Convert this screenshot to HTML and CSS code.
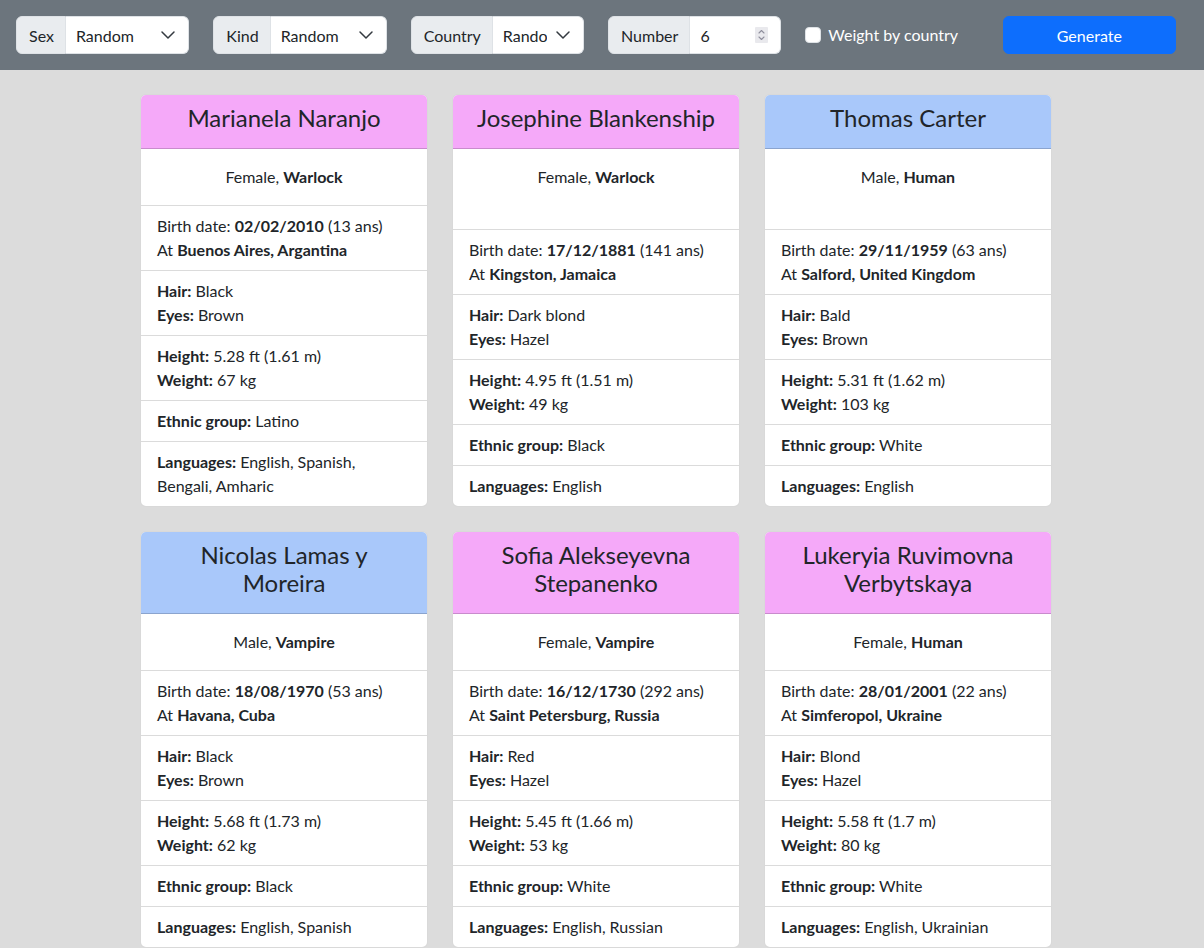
FILE: index.html
```html
<!DOCTYPE html>
<html lang="en">
<head>
<meta charset="utf-8">
<title>Character generator</title>
<link rel="stylesheet" href="styles.css">
</head>
<body>
<nav class="navbar">
  <div class="input-group">
    <span class="ig-label">Sex</span>
    <div class="ig-select"><span class="val">Random</span><svg class="chev" viewBox="0 0 16 16"><path d="M2 5l6 6 6-6"/></svg></div>
  </div>
  <div class="input-group">
    <span class="ig-label">Kind</span>
    <div class="ig-select"><span class="val">Random</span><svg class="chev" viewBox="0 0 16 16"><path d="M2 5l6 6 6-6"/></svg></div>
  </div>
  <div class="input-group">
    <span class="ig-label">Country</span>
    <div class="ig-select"><span class="val">Random</span><svg class="chev" viewBox="0 0 16 16"><path d="M2 5l6 6 6-6"/></svg></div>
  </div>
  <div class="input-group">
    <span class="ig-label">Number</span>
    <div class="ig-select"><span class="val">6</span><svg class="spin" viewBox="0 0 13 16"><rect width="13" height="16" rx="1"/><path d="M4 6l2.5-2.5L9 6M4 10l2.5 2.5L9 10"/></svg></div>
  </div>
  <label class="check"><span class="box"></span>Weight by country</label>
  <button class="btn">Generate</button>
</nav>

<main class="cards">
  <article class="card">
    <header class="card-header female">Marianela Naranjo</header>
    <div class="card-body">Female, <b>Warlock</b></div>
    <div class="item">Birth date: <b>02/02/2010</b> (13 ans)<br>At <b>Buenos Aires, Argantina</b></div>
    <div class="item"><b>Hair:</b> Black<br><b>Eyes:</b> Brown</div>
    <div class="item"><b>Height:</b> 5.28 ft (1.61 m)<br><b>Weight:</b> 67 kg</div>
    <div class="item"><b>Ethnic group:</b> Latino</div>
    <div class="item"><b>Languages:</b> English, Spanish, Bengali, Amharic</div>
  </article>
  <article class="card">
    <header class="card-header female">Josephine Blankenship</header>
    <div class="card-body">Female, <b>Warlock</b></div>
    <div class="item">Birth date: <b>17/12/1881</b> (141 ans)<br>At <b>Kingston, Jamaica</b></div>
    <div class="item"><b>Hair:</b> Dark blond<br><b>Eyes:</b> Hazel</div>
    <div class="item"><b>Height:</b> 4.95 ft (1.51 m)<br><b>Weight:</b> 49 kg</div>
    <div class="item"><b>Ethnic group:</b> Black</div>
    <div class="item"><b>Languages:</b> English</div>
  </article>
  <article class="card">
    <header class="card-header male">Thomas Carter</header>
    <div class="card-body">Male, <b>Human</b></div>
    <div class="item">Birth date: <b>29/11/1959</b> (63 ans)<br>At <b>Salford, United Kingdom</b></div>
    <div class="item"><b>Hair:</b> Bald<br><b>Eyes:</b> Brown</div>
    <div class="item"><b>Height:</b> 5.31 ft (1.62 m)<br><b>Weight:</b> 103 kg</div>
    <div class="item"><b>Ethnic group:</b> White</div>
    <div class="item"><b>Languages:</b> English</div>
  </article>
  <article class="card">
    <header class="card-header male">Nicolas Lamas y Moreira</header>
    <div class="card-body">Male, <b>Vampire</b></div>
    <div class="item">Birth date: <b>18/08/1970</b> (53 ans)<br>At <b>Havana, Cuba</b></div>
    <div class="item"><b>Hair:</b> Black<br><b>Eyes:</b> Brown</div>
    <div class="item"><b>Height:</b> 5.68 ft (1.73 m)<br><b>Weight:</b> 62 kg</div>
    <div class="item"><b>Ethnic group:</b> Black</div>
    <div class="item"><b>Languages:</b> English, Spanish</div>
  </article>
  <article class="card">
    <header class="card-header female">Sofia Alekseyevna Stepanenko</header>
    <div class="card-body">Female, <b>Vampire</b></div>
    <div class="item">Birth date: <b>16/12/1730</b> (292 ans)<br>At <b>Saint Petersburg, Russia</b></div>
    <div class="item"><b>Hair:</b> Red<br><b>Eyes:</b> Hazel</div>
    <div class="item"><b>Height:</b> 5.45 ft (1.66 m)<br><b>Weight:</b> 53 kg</div>
    <div class="item"><b>Ethnic group:</b> White</div>
    <div class="item"><b>Languages:</b> English, Russian</div>
  </article>
  <article class="card">
    <header class="card-header female">Lukeryia Ruvimovna Verbytskaya</header>
    <div class="card-body">Female, <b>Human</b></div>
    <div class="item">Birth date: <b>28/01/2001</b> (22 ans)<br>At <b>Simferopol, Ukraine</b></div>
    <div class="item"><b>Hair:</b> Blond<br><b>Eyes:</b> Hazel</div>
    <div class="item"><b>Height:</b> 5.58 ft (1.7 m)<br><b>Weight:</b> 80 kg</div>
    <div class="item"><b>Ethnic group:</b> White</div>
    <div class="item"><b>Languages:</b> English, Ukrainian</div>
  </article>
</main>
</body>
</html>
```
FILE: styles.css
```css
*, *::before, *::after { box-sizing: border-box; }

body {
  margin: 0;
  background: #dcdcdc;
  font-family: Lato, "Noto Sans", sans-serif;
  font-size: 16px;
  line-height: 24px;
  color: #212529;
}

b { font-weight: 700; }

/* ---------- top bar ---------- */
.navbar {
  background: #6c757d;
  display: grid;
  grid-template-columns: repeat(6, minmax(0, 1fr));
  column-gap: 24px;
  padding: 16px 28px 16px 16px;
}

.input-group {
  display: flex;
  height: 38px;
  min-width: 0;
}

.ig-label {
  flex: none;
  background: #e9ecef;
  border: 1px solid #dee2e6;
  border-radius: 6px 0 0 6px;
  padding: 7px 11px 5px 12px;
  white-space: nowrap;
}

.ig-select {
  flex: 1;
  min-width: 0;
  display: flex;
  align-items: center;
  background: #fff;
  border: 1px solid #dee2e6;
  border-left: 0;
  border-radius: 0 6px 6px 0;
  padding: 7px 12px 5px 10px;
}

.val {
  flex: 1;
  min-width: 0;
  overflow: hidden;
  white-space: nowrap;
}

.chev {
  flex: none;
  width: 16px;
  height: 16px;
  margin: -2px 0 0 8px;
  fill: none;
  stroke: #343a40;
  stroke-width: 1.5;
  stroke-linecap: round;
  stroke-linejoin: round;
}

.spin {
  flex: none;
  width: 13px;
  height: 16px;
  margin-top: -2px;
}
.spin rect { fill: #e9e9ed; }
.spin path {
  fill: none;
  stroke: #8f8f9d;
  stroke-width: 1.1;
  stroke-linecap: round;
  stroke-linejoin: round;
}

.check {
  display: flex;
  align-items: center;
  gap: 7px;
  color: #fff;
  white-space: nowrap;
  min-width: 0;
}

.box {
  width: 16px;
  height: 16px;
  background: #fff;
  border: 1px solid #dee2e6;
  border-radius: 4px;
  flex: none;
}

.btn {
  height: 38px;
  background: #0d6efd;
  border: 1px solid #0d6efd;
  border-radius: 6px;
  color: #fff;
  font: inherit;
  line-height: 24px;
  padding: 7px 12px 5px;
}

/* ---------- cards ---------- */
.cards {
  display: grid;
  grid-template-columns: repeat(3, 288px);
  column-gap: 24px;
  row-gap: 24px;
  margin: 24px 0 0 140px;
}

.card {
  display: flex;
  flex-direction: column;
  background: #fff;
  border: 1px solid rgba(0, 0, 0, 0.15);
  border-radius: 6px;
  overflow: hidden;
}

.card-header {
  padding: 9px 16px 16px;
  font-size: 24px;
  line-height: 28px;
  text-align: center;
  border-bottom: 1px solid rgba(0, 0, 0, 0.175);
}

.female { background: #f5a9f9; }
.male { background: #a9c8fa; }

.card-body {
  flex: 1;
  padding: 16px;
  text-align: center;
}

.item {
  padding: 8px 16px;
  border-top: 1px solid rgba(0, 0, 0, 0.14);
}
```
